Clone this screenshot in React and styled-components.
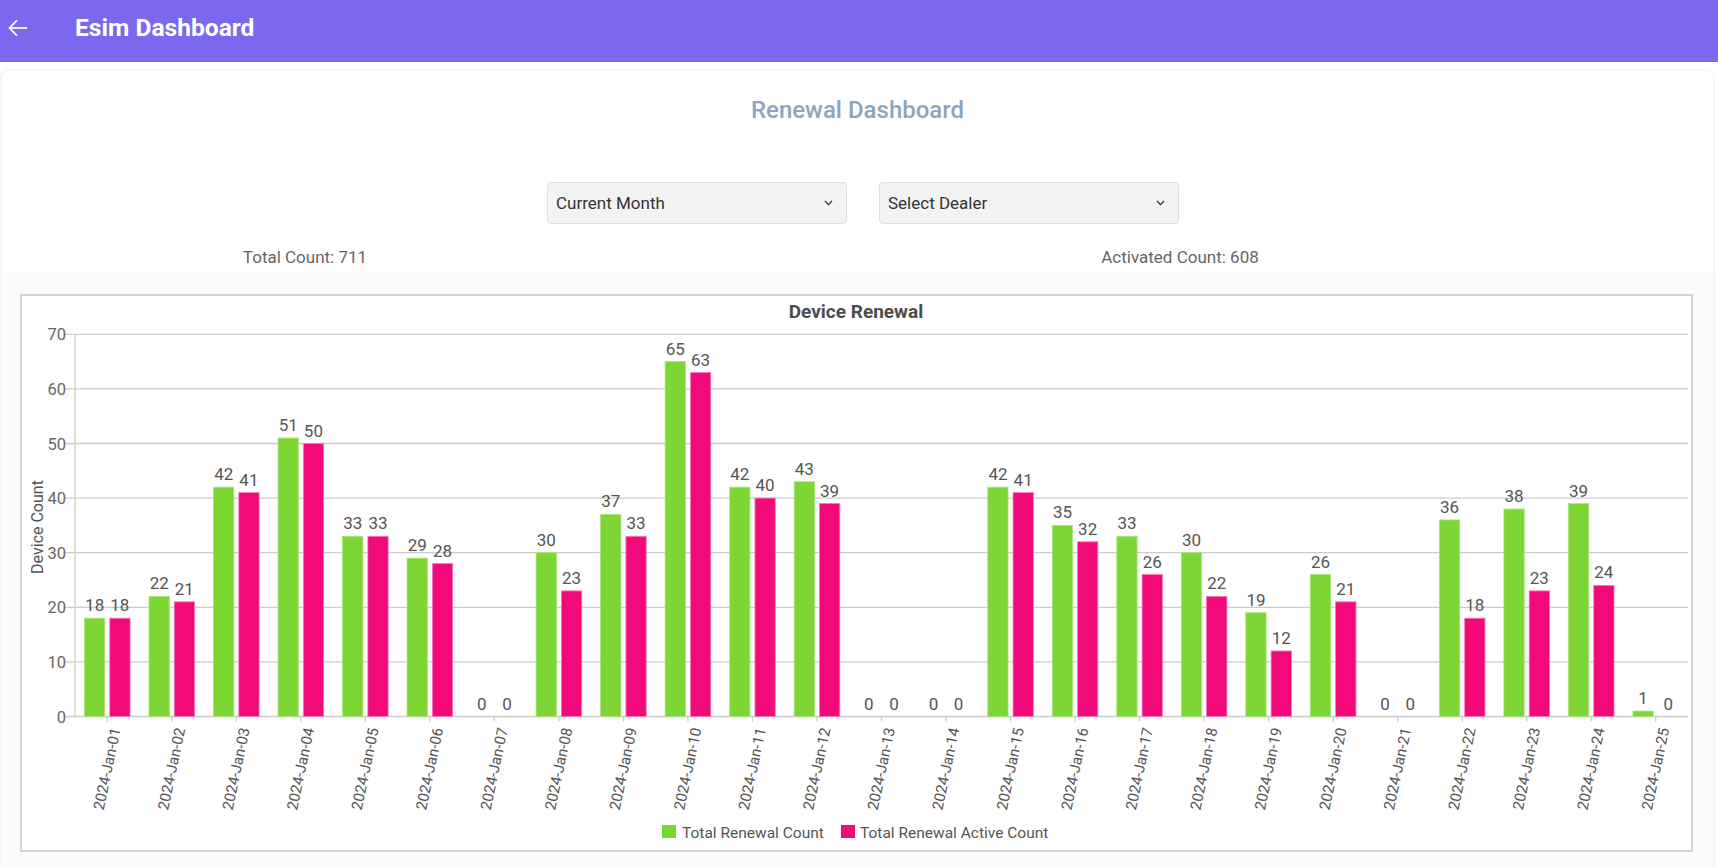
import React from "react";
import styled, { createGlobalStyle } from "styled-components";

const GlobalStyle = createGlobalStyle`
  html, body {
    margin: 0;
    padding: 0;
    background: #ffffff;
    font-family: Roboto, "Noto Sans", "Liberation Sans", sans-serif;
  }
  * { box-sizing: border-box; }
`;

const Header = styled.header`
  height: 62px;
  background: #7b68ee;
  display: flex;
  align-items: center;
  gap: 47px;
  padding: 0 0 6px 8px;
  color: #ffffff;
`;

const BackButton = styled.button`
  width: 20px;
  height: 20px;
  padding: 0;
  border: 0;
  background: transparent;
  display: flex;
  align-items: center;
  justify-content: center;
  cursor: pointer;
`;

const HeaderTitle = styled.h1`
  margin: 0;
  font-size: 24.6px;
  font-weight: 700;
  line-height: 28px;
  color: #ffffff;
`;

const Main = styled.main`
  padding: 9px 5px 0 2px;
`;

const Card = styled.section`
  background: #ffffff;
  border-radius: 6px;
  box-shadow: 0 0 4px rgba(0, 0, 0, 0.12);
  overflow: hidden;
`;

const PageTitle = styled.h2`
  margin: 0;
  padding-top: 25px;
  text-align: center;
  font-size: 24px;
  font-weight: 500;
  line-height: 28px;
  color: #8fa3bd;
`;

const Filters = styled.div`
  display: flex;
  justify-content: center;
  gap: 32px;
  margin-top: 58px;
  padding-left: 11px;
`;

const SelectBox = styled.div`
  width: 300px;
  height: 42px;
  background: #f3f3f3;
  border: 1px solid #dedede;
  border-radius: 4px;
  display: flex;
  align-items: center;
  justify-content: space-between;
  padding: 0 13px 0 8px;
  font-size: 17px;
  color: #333333;
  cursor: pointer;
`;

const Totals = styled.div`
  display: flex;
  gap: 435px;
  margin-top: 23px;
  padding-left: 83px;
`;

const Stat = styled.div`
  width: 440px;
  text-align: center;
  font-size: 17px;
  line-height: 20px;
  color: #666666;
`;

const ChartSection = styled.div`
  margin-top: 5px;
  background: #fbfbfb;
  padding: 22px 20px 20px 18px;
`;

const ChartBox = styled.div`
  height: 558px;
  background: #ffffff;
  border: 2px solid #d4d4d4;
`;

const ChartSvg = styled.svg`
  display: block;
  width: 100%;
  height: 554px;
  font-family: Roboto, "Noto Sans", "Liberation Sans", sans-serif;
`;

const green = [18, 22, 42, 51, 33, 29, 0, 30, 37, 65, 42, 43, 0, 0, 42, 35, 33, 30, 19, 26, 0, 36, 38, 39, 1];
const pink = [18, 21, 41, 50, 33, 28, 0, 23, 33, 63, 40, 39, 0, 0, 41, 32, 26, 22, 12, 21, 0, 18, 23, 24, 0];

const GREEN = "#7ed634";
const PINK = "#f20a7a";

const W = 1669;
const PL = 53;
const PR = 1666;
const PT = 38.3;
const PB = 420.5;
const MAX = 70;

const yOf = (v) => PB - (v / MAX) * (PB - PT);

function Chevron() {
  return (
    <svg width="9" height="6" viewBox="0 0 9 6" aria-hidden="true">
      <polyline points="1,1 4.5,4.6 8,1" fill="none" stroke="#333" strokeWidth="1.3" />
    </svg>
  );
}

function BackArrow() {
  return (
    <svg width="20" height="20" viewBox="0 0 20 20" aria-hidden="true">
      <line x1="1.5" y1="10" x2="19" y2="10" stroke="#fff" strokeWidth="1.7" />
      <polyline points="9,2.3 1.5,10 9,17.7" fill="none" stroke="#fff" strokeWidth="1.7" />
    </svg>
  );
}

function DeviceRenewalChart() {
  const n = green.length;
  const step = (PR - PL) / n;
  const ticks = [0, 10, 20, 30, 40, 50, 60, 70];
  return (
    <ChartSvg viewBox={`0 0 ${W} 554`}>
      <text x={834} y={22} textAnchor="middle" fontSize="19" fontWeight="700" fill="#4d4d4d">
        Device Renewal
      </text>

      {ticks.map((t) => (
        <g key={t}>
          <line x1={43} x2={PR} y1={yOf(t)} y2={yOf(t)} stroke="#cccccc" strokeWidth="1.3" />
          <text x={44} y={yOf(t) + 6} textAnchor="end" fontSize="16.5" fill="#666">
            {t}
          </text>
        </g>
      ))}
      <line x1={PL} x2={PL} y1={PT} y2={PB + 1} stroke="#cccccc" strokeWidth="1.3" />

      <text
        transform={`translate(21 231) rotate(-90)`}
        textAnchor="middle"
        fontSize="16"
        fill="#555"
      >
        Device Count
      </text>

      {green.map((g, i) => {
        const cx = PL + step * (i + 0.5);
        const p = pink[i];
        const label = `2024-Jan-${String(i + 1).padStart(2, "0")}`;
        return (
          <g key={i}>
            {g > 0 && (
              <rect x={cx - 22.8} y={yOf(g)} width={20.3} height={PB - yOf(g)} fill={GREEN} stroke="#a9e47a" strokeWidth="0.8" />
            )}
            {p > 0 && (
              <rect x={cx + 2.5} y={yOf(p)} width={20.3} height={PB - yOf(p)} fill={PINK} stroke="#f77ab6" strokeWidth="0.8" />
            )}
            <text x={cx - 12.6} y={yOf(g) - 7} textAnchor="middle" fontSize="17" fill="#555">
              {g}
            </text>
            <text x={cx + 12.6} y={yOf(p) - 7} textAnchor="middle" fontSize="17" fill="#555">
              {p}
            </text>
            <line x1={cx} x2={cx} y1={PB} y2={PB + 5} stroke="#cccccc" strokeWidth="1.3" />
            <text
              transform={`translate(${cx + 13.5} 433) rotate(-78)`}
              textAnchor="end"
              fontSize="15"
              fill="#555"
            >
              {label}
            </text>
          </g>
        );
      })}

      <g>
        <rect x={640} y={529} width={14} height={13} fill={GREEN} />
        <text x={660} y={542} fontSize="15.5" fill="#555">
          Total Renewal Count
        </text>
        <rect x={819} y={529} width={14} height={13} fill={PINK} />
        <text x={838} y={542} fontSize="15.5" fill="#555">
          Total Renewal Active Count
        </text>
      </g>
    </ChartSvg>
  );
}

export default function App() {
  return (
    <>
      <GlobalStyle />
      <Header>
        <BackButton aria-label="Back">
          <BackArrow />
        </BackButton>
        <HeaderTitle>Esim Dashboard</HeaderTitle>
      </Header>
      <Main>
        <Card>
          <PageTitle>Renewal Dashboard</PageTitle>
          <Filters>
            <SelectBox>
              <span>Current Month</span>
              <Chevron />
            </SelectBox>
            <SelectBox>
              <span>Select Dealer</span>
              <Chevron />
            </SelectBox>
          </Filters>
          <Totals>
            <Stat>Total Count: 711</Stat>
            <Stat>Activated Count: 608</Stat>
          </Totals>
          <ChartSection>
            <ChartBox>
              <DeviceRenewalChart />
            </ChartBox>
          </ChartSection>
        </Card>
      </Main>
    </>
  );
}
